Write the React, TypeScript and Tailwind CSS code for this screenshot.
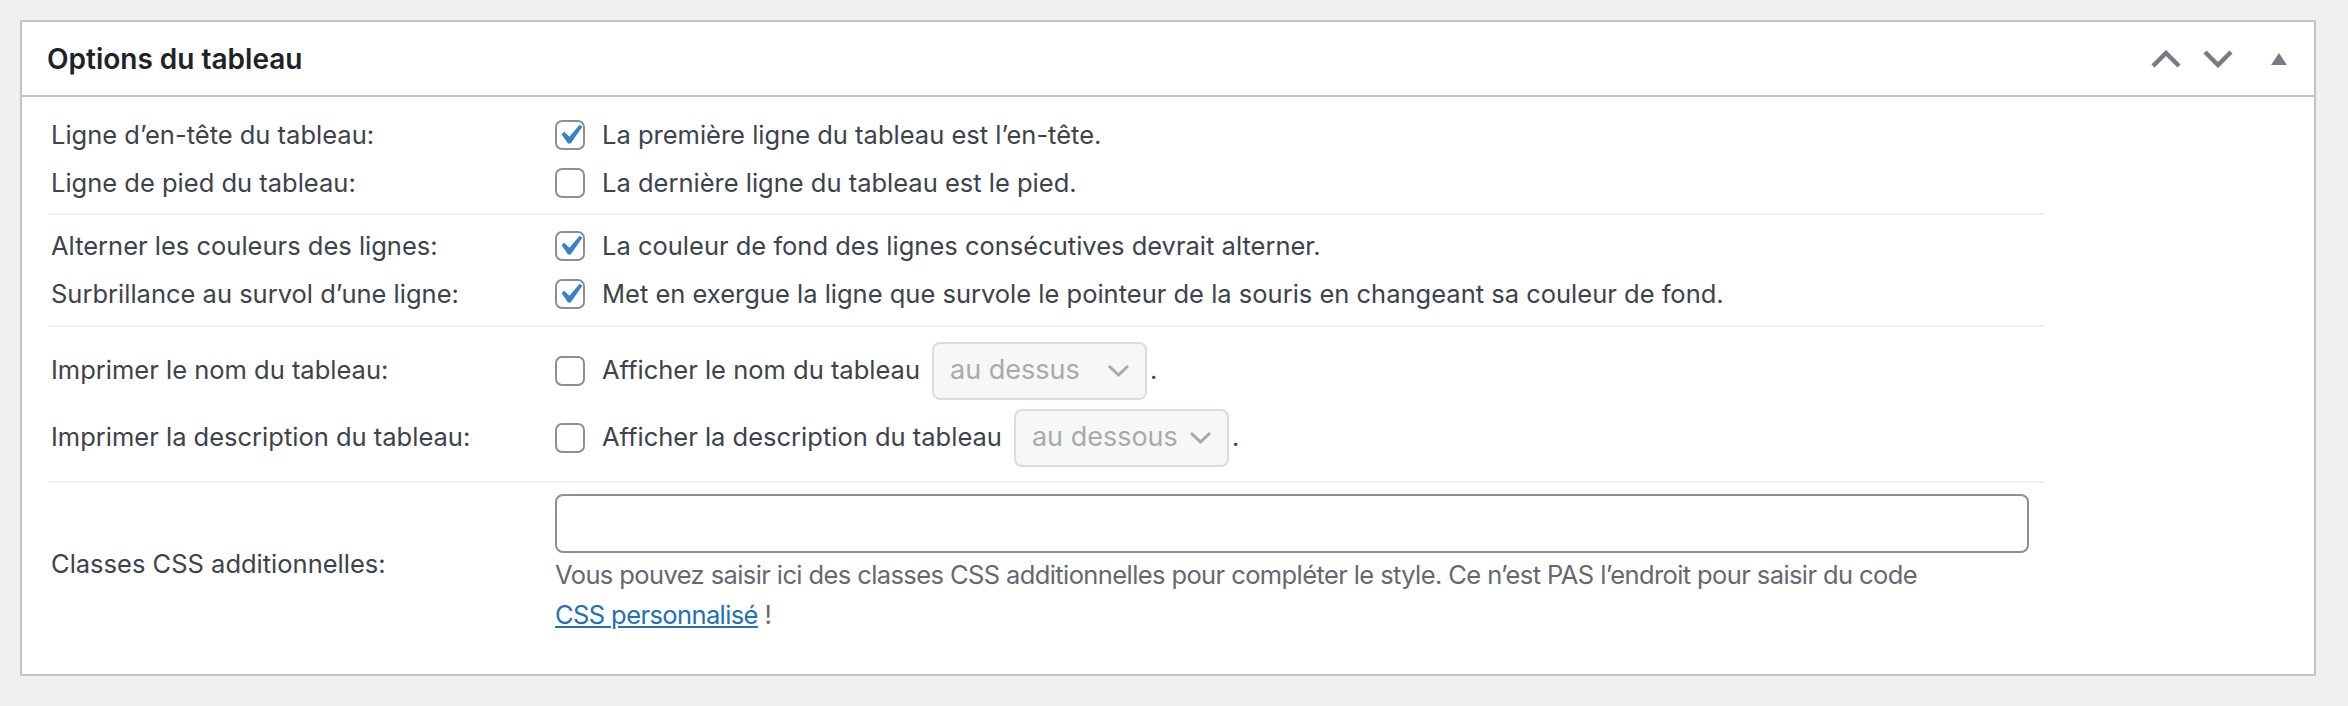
import React from 'react';

const font = { fontFamily: 'Inter, "Noto Sans", sans-serif' };

function Checkbox({ checked }: { checked?: boolean }) {
  return (
    <span className="relative flex h-[30px] w-[30px] shrink-0 items-center justify-center rounded-[7px] border-2 border-[#8c8f94] bg-white">
      {checked && (
        <svg viewBox="0 0 20 20" className="absolute h-[40px] w-[40px]">
          <path
            d="M14.83 4.89l1.34.94-5.81 8.38H9.02L5.78 9.67l1.34-1.25 2.57 2.4z"
            fill="#3582c4"
          />
        </svg>
      )}
    </span>
  );
}

function CheckLabel({ checked, children }: { checked?: boolean; children: React.ReactNode }) {
  return (
    <label className="flex items-center gap-[17px]">
      <Checkbox checked={checked} />
      <span>{children}</span>
    </label>
  );
}

function Select({ value }: { value: string }) {
  return (
    <div className="flex h-[58px] w-[215px] items-center justify-between rounded-[8px] border-2 border-[#dcdcde] bg-[#f6f7f7] pl-[16px] pr-[15px] text-[27px] text-[#a7aaad]">
      <span>{value}</span>
      <svg width="23" height="13" viewBox="0 0 23 13" fill="none" className="shrink-0">
        <path d="M2 2l9.5 9L21 2" stroke="#a7aaad" strokeWidth="3" />
      </svg>
    </div>
  );
}

function Row({ label, h, children }: { label: string; h: string; children: React.ReactNode }) {
  return (
    <div className={`flex items-center ${h}`}>
      <div className="w-[507px] shrink-0 pl-[3px]">{label}</div>
      <div className="flex items-center">{children}</div>
    </div>
  );
}

function Chevron({ up }: { up?: boolean }) {
  return (
    <svg width="32" height="18" viewBox="0 0 32 18" fill="none">
      <path d={up ? 'M3 16L16 3l13 13' : 'M3 2l13 13L29 2'} stroke="#787c82" strokeWidth="4.5" />
    </svg>
  );
}

export default function App() {
  return (
    <div className="min-h-screen bg-[#f0f0f1] pl-[20px] pt-[20px]" style={font}>
      <div className="w-[2296px] border-2 border-[#c3c4c7] bg-white">
        <div className="flex h-[75px] items-center justify-between border-b-2 border-[#c3c4c7] pl-[25px]">
          <h2 className="text-[28px] font-semibold text-[#1d2327]">Options du tableau</h2>
          <div className="flex h-full items-center">
            <button className="flex h-full w-[52px] items-center justify-center">
              <Chevron up />
            </button>
            <button className="flex h-full w-[52px] items-center justify-center">
              <Chevron />
            </button>
            <button className="flex h-full w-[70px] items-center justify-center">
              <svg width="16" height="12" viewBox="0 0 16 12">
                <polygon points="0,12 8,0 16,12" fill="#787c82" />
              </svg>
            </button>
          </div>
        </div>

        <div className="pl-[26px] pb-[39px] text-[25.5px] text-[#3c434a]">
          <div className="w-[1997px]">
            <div className="pt-[14px] pb-[6px]">
              <Row label="Ligne d’en-tête du tableau:" h="h-[48px]">
                <CheckLabel checked>La première ligne du tableau est l’en-tête.</CheckLabel>
              </Row>
              <Row label="Ligne de pied du tableau:" h="h-[48px]">
                <CheckLabel>La dernière ligne du tableau est le pied.</CheckLabel>
              </Row>
            </div>

            <div className="border-t-2 border-[#f0f0f1] pt-[7px] pb-[7px]">
              <Row label="Alterner les couleurs des lignes:" h="h-[48px]">
                <CheckLabel checked>La couleur de fond des lignes consécutives devrait alterner.</CheckLabel>
              </Row>
              <Row label="Surbrillance au survol d’une ligne:" h="h-[48px]">
                <CheckLabel checked>
                  Met en exergue la ligne que survole le pointeur de la souris en changeant sa couleur de fond.
                </CheckLabel>
              </Row>
            </div>

            <div className="border-t-2 border-[#f0f0f1] pt-[10px] pb-[10px]">
              <Row label="Imprimer le nom du tableau:" h="h-[67px]">
                <CheckLabel>Afficher le nom du tableau</CheckLabel>
                <div className="ml-[12px]">
                  <Select value="au dessus" />
                </div>
                <span className="ml-[3px]">.</span>
              </Row>
              <Row label="Imprimer la description du tableau:" h="h-[67px]">
                <CheckLabel>Afficher la description du tableau</CheckLabel>
                <div className="ml-[12px]">
                  <Select value="au dessous" />
                </div>
                <span className="ml-[3px]">.</span>
              </Row>
            </div>

            <div className="flex items-center border-t-2 border-[#f0f0f1] pt-[11px]">
              <div className="w-[507px] shrink-0 pl-[3px]">Classes CSS additionnelles:</div>
              <div className="flex flex-col">
                <input
                  type="text"
                  className="h-[59px] w-[1474px] rounded-[8px] border-2 border-[#8c8f94] bg-white px-[16px] outline-none"
                />
                <p className="mt-[2px] leading-[40px] tracking-[-0.6px] text-[#646970]">
                  Vous pouvez saisir ici des classes CSS additionnelles pour compléter le style. Ce n’est PAS
                  l’endroit pour saisir du code
                  <br />
                  <a href="#" className="text-[#2271b1] underline">
                    CSS personnalisé
                  </a>{' '}
                  !
                </p>
              </div>
            </div>
          </div>
        </div>
      </div>
    </div>
  );
}
